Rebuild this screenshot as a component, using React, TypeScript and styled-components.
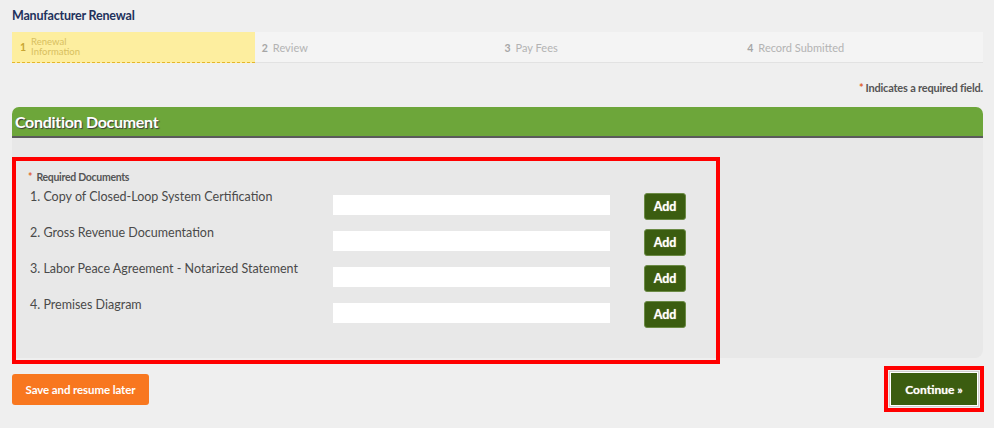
import styled, { createGlobalStyle } from "styled-components";

const GlobalStyle = createGlobalStyle`
    html, body {
        margin: 0;
        padding: 0;
        background-color: #efefef;
        font-family: 'Lato', 'Open Sans', sans-serif;
    }
`

const Page = styled.div`
    padding: 9px 11px 0 12px;
    display: flex;
    flex-direction: column;
`

const Title = styled.div`
    color: #22315c;
    font-weight: 700;
    font-size: 12.5px;
    line-height: 14px;
    letter-spacing: -0.2px;
`

const StepBar = styled.div`
    margin-top: 9px;
    display: grid;
    grid-template-columns: repeat(4, 1fr);
    height: 30px;
    background-color: #f4f4f4;
    border-bottom: 1px solid #e2e2e2;
`

const Step = styled.div<{ $active?: boolean }>`
    display: flex;
    align-items: center;
    gap: 5px;
    padding-left: ${p => p.$active ? "8px" : "7px"};
    background-color: ${p => p.$active ? "#fdee9f" : "transparent"};
    border-bottom: ${p => p.$active ? "1px dashed #e5b62a" : "none"};
    margin-bottom: -1px;
    color: ${p => p.$active ? "#d8c060" : "#b3b3b3"};
    font-size: 10px;
    line-height: 10px;
`

const StepNum = styled.span<{ $active?: boolean }>`
    font-weight: 700;
    font-size: 10.5px;
    color: ${p => p.$active ? "#c9a634" : "#a6a6a6"};
`

const StepLabel = styled.span<{ $active?: boolean }>`
    font-size: ${p => p.$active ? "9.5px" : "11px"};
`

const RequiredNote = styled.div`
    margin-top: 18px;
    align-self: flex-end;
    font-size: 11px;
    font-weight: 700;
    color: #555;
    letter-spacing: -0.2px;
`

const Star = styled.span`
    color: #e0622a;
    margin-right: 2px;
`

const Panel = styled.div`
    margin-top: 13px;
    display: flex;
    flex-direction: column;
`

const PanelHeader = styled.div`
    height: 29px;
    background-color: #6da63a;
    border-radius: 7px 7px 0 0;
    border-bottom: 2px solid #5b5b5b;
    color: #ffffff;
    font-weight: 700;
    font-size: 16px;
    display: flex;
    align-items: center;
    padding-left: 3px;
    text-shadow: 1px 1px 1px #3a3a3a;
    letter-spacing: -0.3px;
`

const PanelBody = styled.div`
    background-color: #e8e8e8;
    border-radius: 0 0 8px 0;
    height: 220px;
    padding-top: 19px;
    box-sizing: border-box;
`

const Highlight = styled.div`
    width: 708px;
    height: 207px;
    box-sizing: border-box;
    border: 4px solid #ff0000;
    padding: 10px 0 0 12px;
`

const DocHeading = styled.div`
    font-size: 10.5px;
    font-weight: 700;
    color: #555;
    line-height: 12px;
    letter-spacing: -0.3px;
`

const DocList = styled.div`
    margin-top: 7px;
    display: flex;
    flex-direction: column;
    gap: 9px;
`

const DocRow = styled.div`
    display: flex;
    align-items: flex-start;
    height: 27px;
`

const DocLabel = styled.div`
    width: 303px;
    padding-left: 2px;
    font-size: 12.5px;
    color: #4a4a4a;
    line-height: 14px;
`

const FileInput = styled.div`
    margin-top: 5px;
    width: 277px;
    height: 20px;
    background-color: #ffffff;
`

const AddButton = styled.button`
    margin-left: 34px;
    margin-top: 3px;
    width: 42px;
    height: 27px;
    background-color: #3b5d10;
    border: 1px solid #6b8a45;
    border-radius: 3px;
    color: #ffffff;
    font-family: 'Lato', sans-serif;
    font-weight: 700;
    font-size: 12.5px;
    text-shadow: 0 0 1px #c8c8a0;
    padding: 0;
`

const Footer = styled.div`
    margin-top: 8px;
    display: flex;
    justify-content: space-between;
    align-items: center;
`

const SaveButton = styled.button`
    width: 137px;
    height: 31px;
    background-color: #f8771f;
    border: none;
    border-radius: 3px;
    color: #ffffff;
    font-family: 'Lato', sans-serif;
    font-weight: 700;
    font-size: 11.5px;
    letter-spacing: -0.1px;
    padding: 0;
`

const ContinueFrame = styled.div`
    width: 100px;
    height: 46px;
    box-sizing: border-box;
    border: 4px solid #ff0000;
    display: grid;
    place-items: center;
    margin-right: -1px;
`

const ContinueButton = styled.button`
    width: 88px;
    height: 34px;
    background-color: #3b5d10;
    border: 1px solid #ffffff;
    outline: 1px solid #cfcfcf;
    color: #ffffff;
    font-family: 'Lato', sans-serif;
    font-weight: 700;
    font-size: 12px;
    text-shadow: 0 0 1px #c8c8a0;
    padding: 0;
`

const steps = [
    { num: "1", label: "Renewal\nInformation" },
    { num: "2", label: "Review" },
    { num: "3", label: "Pay Fees" },
    { num: "4", label: "Record Submitted" },
]

const documents = [
    "1. Copy of Closed-Loop System Certification",
    "2. Gross Revenue Documentation",
    "3. Labor Peace Agreement - Notarized Statement",
    "4. Premises Diagram",
]

const App = () => {
    return (
        <>
            <GlobalStyle />
            <Page>
                <Title>Manufacturer Renewal</Title>
                <StepBar>
                    {steps.map((s, i) => (
                        <Step key={s.num} $active={i === 0}>
                            <StepNum $active={i === 0}>{s.num}</StepNum>
                            <StepLabel $active={i === 0}>
                                {s.label.split("\n").map((l, j) => (
                                    <div key={j}>{l}</div>
                                ))}
                            </StepLabel>
                        </Step>
                    ))}
                </StepBar>
                <RequiredNote><Star>*</Star>Indicates a required field.</RequiredNote>
                <Panel>
                    <PanelHeader>Condition Document</PanelHeader>
                    <PanelBody>
                        <Highlight>
                            <DocHeading><Star>*</Star> Required Documents</DocHeading>
                            <DocList>
                                {documents.map(d => (
                                    <DocRow key={d}>
                                        <DocLabel>{d}</DocLabel>
                                        <FileInput />
                                        <AddButton>Add</AddButton>
                                    </DocRow>
                                ))}
                            </DocList>
                        </Highlight>
                    </PanelBody>
                </Panel>
                <Footer>
                    <SaveButton>Save and resume later</SaveButton>
                    <ContinueFrame>
                        <ContinueButton>Continue »</ContinueButton>
                    </ContinueFrame>
                </Footer>
            </Page>
        </>
    );
}

export default App;
